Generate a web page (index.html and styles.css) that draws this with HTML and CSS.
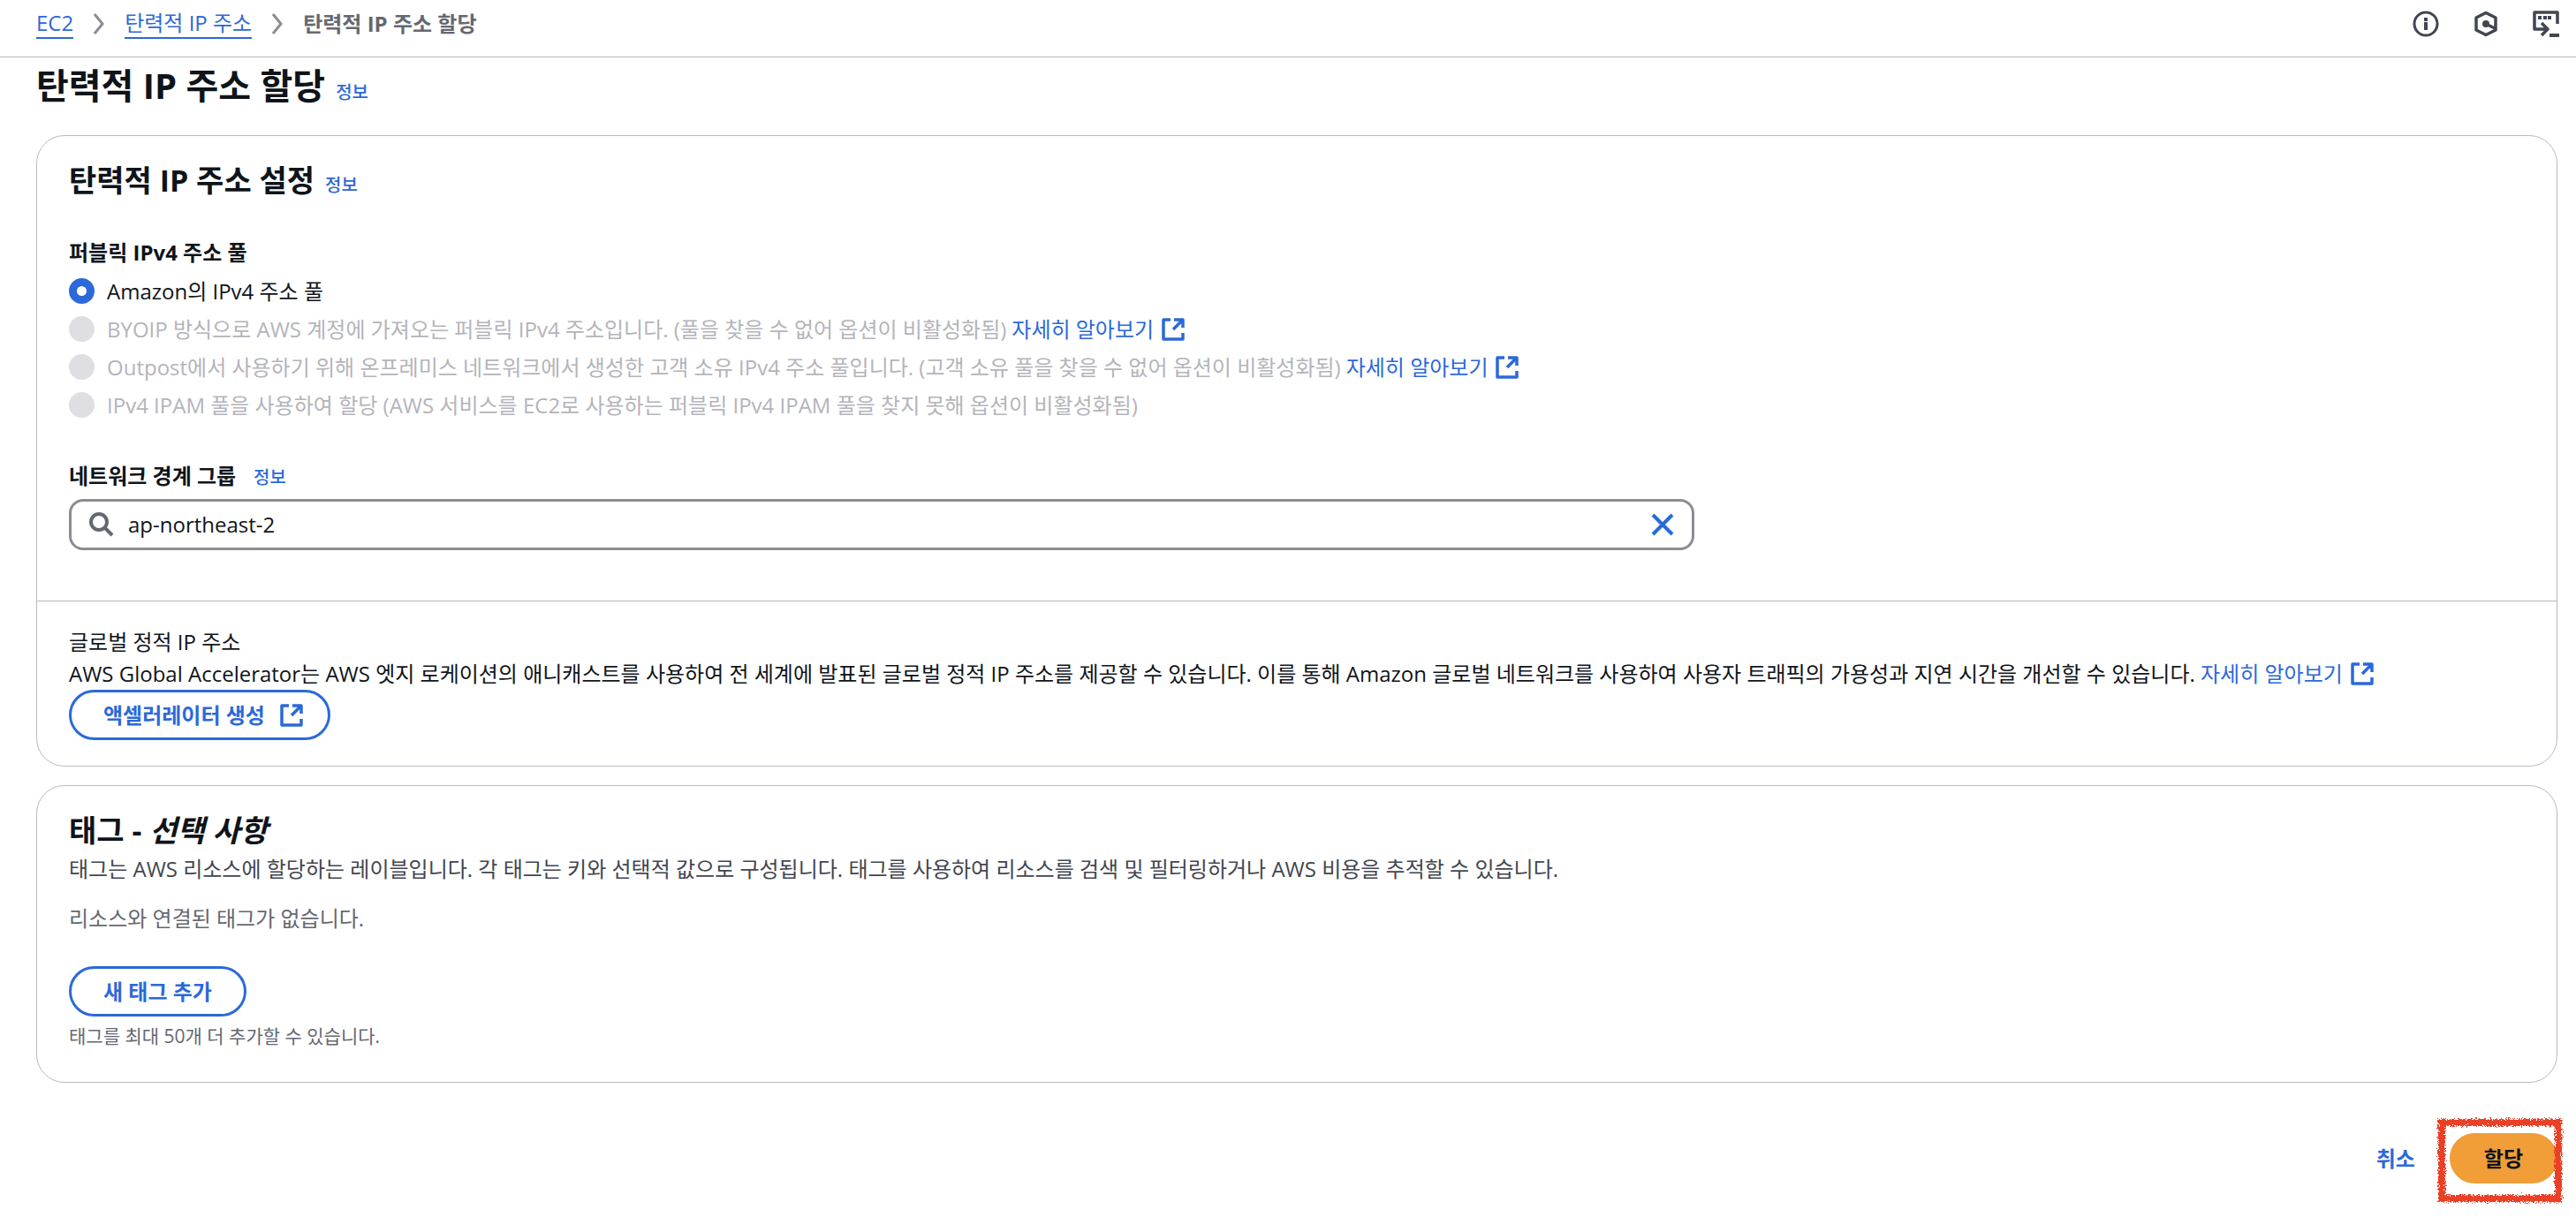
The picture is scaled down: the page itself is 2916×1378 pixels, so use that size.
FILE: index.html
```
<!DOCTYPE html>
<html lang="ko">
<head>
  <meta charset="UTF-8" />
  <meta name="viewport" content="width=device-width, initial-scale=1.0" />
  <title>탄력적 IP 주소 할당 | EC2</title>
  <link rel="stylesheet" href="styles.css">
</head>
<body>
  <!-- shared icon shapes -->
  <svg class="sprite" aria-hidden="true">
    <symbol id="chevron" viewBox="0 0 14 26">
      <path d="M2 2l9 11-9 11" fill="none" stroke="currentColor" stroke-width="3" />
    </symbol>
    <symbol id="external" viewBox="0 0 26 26">
      <path d="M10 2H2v22h22v-7M14 2h10v9M23 3L13 13" fill="none" stroke="currentColor" stroke-width="3.500" stroke-linejoin="round" />
    </symbol>
  </svg>

  <header class="topbar">
    <nav class="breadcrumb" aria-label="breadcrumb">
      <a href="#">EC2</a>
      <svg class="chevron"><use href="#chevron" /></svg>
      <a href="#">탄력적 IP 주소</a>
      <svg class="chevron"><use href="#chevron" /></svg>
      <span class="current">탄력적 IP 주소 할당</span>
    </nav>
    <div class="tools">
      <button type="button" class="tool" aria-label="정보">
        <svg viewBox="0 0 30 30">
          <circle cx="15" cy="15" r="13" fill="none" stroke="currentColor" stroke-width="3" />
          <path d="M13 8h4v4h-4zM13 13h4v9h-4z" fill="currentColor" />
        </svg>
      </button>
      <button type="button" class="tool" aria-label="Amazon Q">
        <svg viewBox="0 0 30 30">
          <path d="M15 2.500l11 5.500v14l-11 5.500-11-5.500V8z" fill="none" stroke="currentColor" stroke-width="3.500" stroke-linejoin="round" />
          <circle cx="15" cy="15" r="4" fill="currentColor" />
          <path d="M15 15l10 5" stroke="currentColor" stroke-width="3.500" />
        </svg>
      </button>
      <button type="button" class="tool" aria-label="CloudShell">
        <svg viewBox="0 0 30 30">
          <path d="M28 15V2H2v19h14M10 14l7 7-7 7" fill="none" stroke="currentColor" stroke-width="3.500" stroke-linejoin="round" />
          <path d="M6 6h4v4H6zM12 6h4v4h-4zM17 6h4v4h-4zM19 26h11v4H19z" fill="currentColor" />
        </svg>
      </button>
    </div>
  </header>

  <main class="page">
    <div class="title-row">
      <h1>탄력적 IP 주소 할당</h1>
      <a class="info" href="#">정보</a>
    </div>

    <section class="card">
      <div class="card-body settings">
        <div class="title-row">
          <h2>탄력적 IP 주소 설정</h2>
          <a class="info" href="#">정보</a>
        </div>

        <fieldset class="pool">
          <legend>퍼블릭 IPv4 주소 풀</legend>
          <div class="option">
            <input type="radio" id="poolAmazon" name="pool" checked />
            <label for="poolAmazon">Amazon의 IPv4 주소 풀</label>
          </div>
          <div class="option">
            <input type="radio" id="poolByoip" name="pool" disabled />
            <label for="poolByoip">BYOIP 방식으로 AWS 계정에 가져오는 퍼블릭 IPv4 주소입니다. (풀을 찾을 수 없어 옵션이 비활성화됨)</label>
            <a class="more" href="#">자세히 알아보기<svg class="external"><use href="#external" /></svg></a>
          </div>
          <div class="option">
            <input type="radio" id="poolOutpost" name="pool" disabled />
            <label for="poolOutpost">Outpost에서 사용하기 위해 온프레미스 네트워크에서 생성한 고객 소유 IPv4 주소 풀입니다. (고객 소유 풀을 찾을 수 없어 옵션이 비활성화됨)</label>
            <a class="more" href="#">자세히 알아보기<svg class="external"><use href="#external" /></svg></a>
          </div>
          <div class="option">
            <input type="radio" id="poolIpam" name="pool" disabled />
            <label for="poolIpam">IPv4 IPAM 풀을 사용하여 할당 (AWS 서비스를 EC2로 사용하는 퍼블릭 IPv4 IPAM 풀을 찾지 못해 옵션이 비활성화됨)</label>
          </div>
        </fieldset>

        <div class="field-row">
          <div class="field">
            <div class="field-label">
              <label for="borderGroup">네트워크 경계 그룹</label>
              <a class="info" href="#">정보</a>
            </div>
            <div class="search">
              <svg class="search-icon" viewBox="0 0 28 28">
                <circle cx="11" cy="11" r="9" fill="none" stroke="currentColor" stroke-width="4" />
                <path d="M17 17l9 9" stroke="currentColor" stroke-width="4" />
              </svg>
              <input type="text" id="borderGroup" value="ap-northeast-2" />
              <button type="button" class="clear" aria-label="지우기">
                <svg viewBox="0 0 26 26"><path d="M2 2l22 22M24 2L2 24" stroke="currentColor" stroke-width="4" /></svg>
              </button>
            </div>
          </div>
        </div>
      </div>

      <div class="card-body accelerator">
        <div>글로벌 정적 IP 주소</div>
        <p>AWS Global Accelerator는 AWS 엣지 로케이션의 애니캐스트를 사용하여 전 세계에 발표된 글로벌 정적 IP 주소를 제공할 수 있습니다. 이를 통해 Amazon 글로벌 네트워크를 사용하여 사용자 트래픽의 가용성과 지연 시간을 개선할 수 있습니다. <a class="more" href="#">자세히 알아보기<svg class="external"><use href="#external" /></svg></a></p>
        <button type="button" class="btn with-icon">액셀러레이터 생성<svg class="external"><use href="#external" /></svg></button>
      </div>
    </section>

    <section class="card">
      <div class="card-body tags">
        <h2>태그 - <em>선택 사항</em></h2>
        <p class="desc">태그는 AWS 리소스에 할당하는 레이블입니다. 각 태그는 키와 선택적 값으로 구성됩니다. 태그를 사용하여 리소스를 검색 및 필터링하거나 AWS 비용을 추적할 수 있습니다.</p>
        <p class="empty">리소스와 연결된 태그가 없습니다.</p>
        <button type="button" class="btn">새 태그 추가</button>
        <p class="hint">태그를 최대 50개 더 추가할 수 있습니다.</p>
      </div>
    </section>

    <div class="actions">
      <button type="button" class="btn link">취소</button>
      <div class="marked">
        <button type="button" class="btn primary">할당</button>
        <!-- crayon style frame around the submit button -->
        <svg class="marker" viewBox="0 0 148 102" aria-hidden="true">
          <filter id="rough" x="-10%" y="-10%" width="120%" height="120%">
            <feTurbulence type="fractalNoise" baseFrequency="0.6" numOctaves="3" seed="4" />
            <feDisplacementMap in="SourceGraphic" scale="8" xChannelSelector="R" yChannelSelector="G" />
          </filter>
          <rect x="8" y="9" width="132" height="86" fill="none" stroke="#ea3f25" stroke-width="8" filter="url(#rough)" />
        </svg>
      </div>
    </div>
  </main>
</body>
</html>
```

FILE: styles.css
```
* {
  box-sizing: border-box;
  margin: 0;
  padding: 0;
}

body {
  background: #fff;
  color: #0f141a;
  font-family: "Open Sans", "Noto Sans CJK KR", sans-serif;
  font-size: 24px;
  line-height: 36px;
}

a {
  color: #2b69d9;
  text-decoration: none;
}

button,
input {
  font: inherit;
}

button {
  cursor: pointer;
}

.sprite {
  display: none;
}

.topbar {
  display: flex;
  justify-content: space-between;
  align-items: center;
  height: 65px;
  padding: 0 19px 10px 41px;
  border-bottom: 1px solid #b9b9c2;
}

.breadcrumb {
  display: flex;
  align-items: center;
  gap: 22px;
}

.breadcrumb a {
  line-height: 32px;
  border-bottom: 2px solid #2b69d9;
}

.chevron {
  width: 14px;
  height: 26px;
  color: #8c8c94;
}

.current {
  color: #656871;
  font-weight: bold;
}

.tools {
  display: flex;
  gap: 38px;
}

.tool {
  width: 30px;
  height: 30px;
  border: none;
  background: none;
  color: #424650;
}

.tool svg {
  display: block;
}

.page {
  padding: 6px 21px 30px 41px;
}

.title-row {
  display: flex;
  align-items: baseline;
  gap: 12px;
}

h1 {
  font-size: 40px;
  line-height: 52px;
}

h2 {
  font-size: 34px;
  line-height: 44px;
}

.info {
  font-size: 20px;
  font-weight: 500;
}

.card {
  margin-bottom: 21px;
  border: 1px solid #b9b9c2;
  border-radius: 32px;
}

.title-row + .card {
  margin-top: 30px;
}

.card-body {
  padding: 28px 36px;
}

.settings {
  padding-bottom: 57px;
  border-bottom: 1px solid #b9b9c2;
}

.pool {
  margin-top: 40px;
  border: none;
}

.pool legend,
.field-label label {
  font-weight: bold;
}

.pool legend {
  margin-bottom: 4px;
}

.option {
  display: flex;
  align-items: center;
  height: 43px;
}

.option input {
  appearance: none;
  width: 29px;
  height: 29px;
  margin-right: 14px;
  border-radius: 50%;
  background: #dedee3;
}

.option input:checked {
  border: 9px solid #2b69d9;
  background: #fff;
}

.option input:disabled + label {
  color: #b4b4bb;
}

.option .more {
  margin-left: 6px;
}

.external {
  width: 26px;
  height: 26px;
  margin-left: 9px;
  vertical-align: -4px;
}

.field-row {
  display: grid;
  grid-template-columns: 2fr 1fr;
  gap: 20px;
  margin-top: 41px;
}

.field-label {
  display: flex;
  align-items: baseline;
  gap: 20px;
  margin-bottom: 6px;
}

.search {
  display: flex;
  align-items: center;
  height: 58px;
  padding: 0 20px;
  border: 3px solid #8c8c94;
  border-radius: 16px;
}

.search-icon {
  width: 28px;
  height: 28px;
  margin-right: 16px;
  color: #656871;
}

.search input {
  flex: 1;
  border: none;
  outline: none;
  color: #0f141a;
}

.clear {
  width: 26px;
  height: 26px;
  border: none;
  background: none;
  color: #2b69d9;
}

.clear svg {
  display: block;
}

.btn {
  height: 57px;
  padding: 0 36px;
  border: 3px solid #2b69d9;
  border-radius: 29px;
  background: #fff;
  color: #2b69d9;
  font-weight: bold;
}

.with-icon {
  display: flex;
  align-items: center;
  gap: 8px;
  padding-right: 28px;
}

.accelerator {
  padding-bottom: 29px;
}

.tags {
  padding-bottom: 34px;
}

.tags h2 {
  margin-bottom: 4px;
}

.desc {
  color: #424650;
}

.empty {
  margin: 20px 0 36px;
  color: #656871;
}

.hint {
  margin-top: 4px;
  color: #656871;
  font-size: 21px;
}

.actions {
  display: flex;
  justify-content: flex-end;
  margin-top: 57px;
}

.link {
  border-color: transparent;
}

.marked {
  position: relative;
}

.primary {
  border-color: #f19e38;
  background: #f19e38;
  color: #0f141a;
}

.marker {
  position: absolute;
  top: -21px;
  left: -17px;
  width: 148px;
  height: 102px;
  pointer-events: none;
}
```
